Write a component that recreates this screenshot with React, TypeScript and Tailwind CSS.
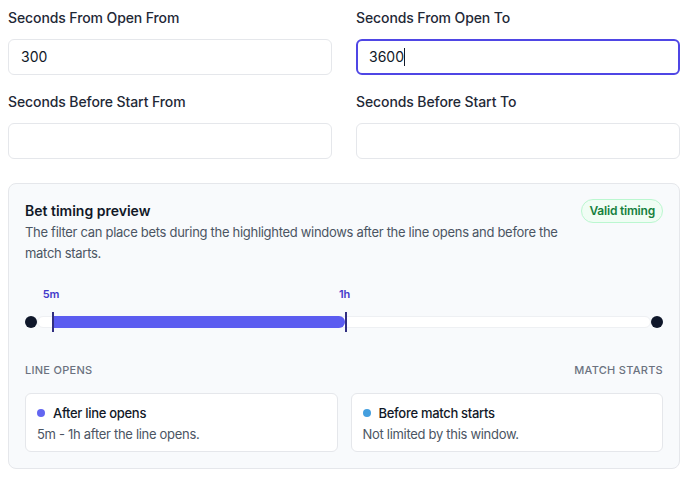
const fields = [
  { label: "Seconds From Open From", value: "300", focused: false },
  { label: "Seconds From Open To", value: "3600", focused: true },
  { label: "Seconds Before Start From", value: "", focused: false },
  { label: "Seconds Before Start To", value: "", focused: false },
];

function Field({ label, value, focused }: { label: string; value: string; focused: boolean }) {
  return (
    <div className="flex flex-col gap-[11px]">
      <span className="text-sm leading-5 font-medium tracking-[-0.1px] text-[#1f2937]">{label}</span>
      <div
        className={`h-9 rounded-md bg-white flex items-center text-sm text-[#111827] ${
          focused ? "border-2 border-[#4f46e5] px-[11px]" : "border border-[#e5e7eb] px-3"
        }`}
      >
        {value}
        {focused && <span className="inline-block w-px h-[18px] bg-[#111827]" />}
      </div>
    </div>
  );
}

function WindowCard({ dot, title, text }: { dot: string; title: string; text: string }) {
  return (
    <div className="rounded-md border border-[#e5e7eb] bg-white px-[11px] pt-[9px] pb-[7px] tracking-[-0.3px]">
      <div className="flex items-center gap-2 text-[13px] leading-5 font-medium text-[#111827]">
        <span className={`w-2 h-2 rounded-full ${dot}`} />
        {title}
      </div>
      <p className="mt-px text-[13px] leading-5 text-[#4b5563]">{text}</p>
    </div>
  );
}

export default function App() {
  return (
    <div className="w-[688px] h-[478px] bg-white p-2 font-['Inter',sans-serif]">
      {/* Inputs */}
      <div className="grid grid-cols-2 gap-x-6 gap-y-[17px]">
        {fields.map((f) => (
          <Field key={f.label} {...f} />
        ))}
      </div>

      {/* Preview panel */}
      <div className="mt-6 rounded-lg border border-[#e5e7eb] bg-[#f8fafc] p-4">
        <div className="flex items-start justify-between gap-3">
          <div className="flex-1">
            <h3 className="text-sm leading-[22px] font-semibold text-[#111827]">Bet timing preview</h3>
            <p className="text-[13px] leading-[21px] tracking-[-0.3px] text-[#4b5563]">
              The filter can place bets during the highlighted windows after the line opens and before the match starts.
            </p>
          </div>
          <span className="mt-[-1px] rounded-full border border-[#bbf7d0] bg-[#f0fdf4] px-[7px] h-6 flex items-center text-xs font-semibold tracking-[-0.2px] text-[#15803d]">
            Valid timing
          </span>
        </div>

        {/* Timeline */}
        <div className="mt-[22px]">
          <div className="relative mx-3 h-4">
            <span className="absolute left-[2.3%] -translate-x-1/2 text-[11px] leading-4 font-semibold text-[#4338ca]">5m</span>
            <span className="absolute left-[50.1%] -translate-x-1/2 text-[11px] leading-4 font-semibold text-[#4338ca]">1h</span>
          </div>
          <div className="mt-2 flex items-center h-6">
            <span className="w-3 h-3 rounded-full bg-[#0f172a] shrink-0" />
            <div className="relative flex-1 h-3 rounded-full bg-white border border-[#eef0f3]">
              <div className="absolute top-[-1px] bottom-[-1px] left-[2.3%] w-[47.8%] rounded-r-full bg-[#5b5cf0]" />
              <div className="absolute top-[-5px] h-5 w-[2px] left-[2.3%] bg-[#312e81]" />
              <div className="absolute top-[-5px] h-5 w-[2px] left-[50.1%] bg-[#312e81]" />
            </div>
            <span className="w-3 h-3 rounded-full bg-[#0f172a] shrink-0" />
          </div>
          <div className="mt-7 flex justify-between text-[11px] leading-4 font-medium tracking-wide text-[#6b7280]">
            <span>LINE OPENS</span>
            <span>MATCH STARTS</span>
          </div>
        </div>

        {/* Windows */}
        <div className="mt-[15px] grid grid-cols-2 gap-[13px]">
          <WindowCard dot="bg-[#6366f1]" title="After line opens" text="5m - 1h after the line opens." />
          <WindowCard dot="bg-[#449fdf]" title="Before match starts" text="Not limited by this window." />
        </div>
      </div>
    </div>
  );
}
